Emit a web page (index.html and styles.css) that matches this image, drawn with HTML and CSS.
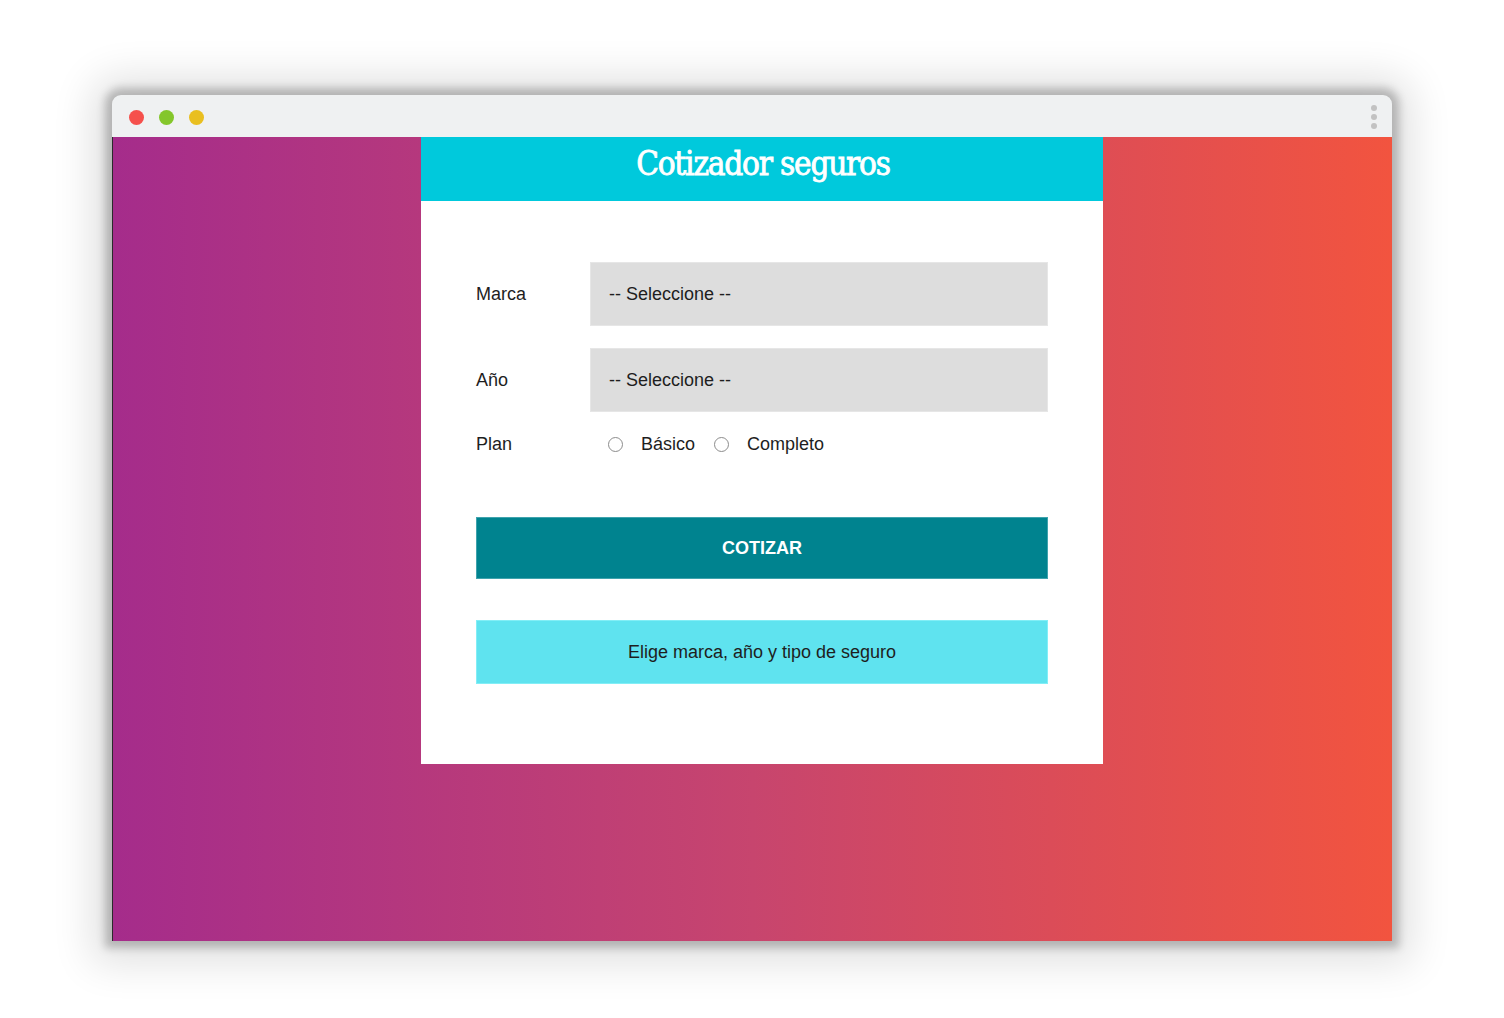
FILE: index.html
```html
<!DOCTYPE html>
<html lang="es">
<head>
<meta charset="utf-8">
<title>Cotizador seguros</title>
<link rel="stylesheet" href="styles.css">
</head>
<body>
<div class="window">
  <div class="titlebar">
    <div class="lights">
      <span class="light red"></span>
      <span class="light green"></span>
      <span class="light yellow"></span>
    </div>
    <div class="kebab"><span></span><span></span><span></span></div>
  </div>
  <div class="content">
    <div class="card">
      <header class="card-header"><h1>Cotizador seguros</h1></header>
      <form class="form">
        <div class="row">
          <label class="label" for="marca">Marca</label>
          <select id="marca" class="field"><option>-- Seleccione --</option></select>
        </div>
        <div class="row">
          <label class="label" for="anio">Año</label>
          <select id="anio" class="field"><option>-- Seleccione --</option></select>
        </div>
        <div class="row plan">
          <span class="label">Plan</span>
          <label class="option"><input type="radio" name="plan" class="radio"><span>Básico</span></label>
          <label class="option"><input type="radio" name="plan" class="radio"><span>Completo</span></label>
        </div>
        <button type="button" class="btn">COTIZAR</button>
        <div class="result">Elige marca, año y tipo de seguro</div>
      </form>
    </div>
  </div>
</div>
</body>
</html>
```
FILE: styles.css
```css
html, body {
  margin: 0;
  padding: 0;
  background: #ffffff;
}
body {
  font-family: "Liberation Sans", Arial, sans-serif;
  padding-top: 95px;
  height: 1018px;
  box-sizing: border-box;
  overflow: hidden;
}
.window {
  margin-left: 112px;
  width: 1280px;
  border-radius: 9px 9px 0 0;
  box-shadow: 0 0 8px 7px rgba(0,0,0,0.22), 0 2px 40px 20px rgba(0,0,0,0.12);
  background: #eff1f2;
}
.titlebar {
  height: 42px;
  display: flex;
  align-items: center;
  justify-content: space-between;
  padding: 0 15px 0 17px;
  border-radius: 9px 9px 0 0;
}
.lights {
  display: flex;
  gap: 15px;
  margin-top: 2px;
}
.light {
  width: 15px;
  height: 15px;
  border-radius: 50%;
  display: block;
}
.red { background: #f5504c; }
.green { background: #84c62b; }
.yellow { background: #e9bf20; }
.kebab {
  display: flex;
  flex-direction: column;
  gap: 3px;
  margin-top: 1px;
}
.kebab span {
  width: 6px;
  height: 6px;
  border-radius: 50%;
  background: #c2c2c2;
  display: block;
}
.content {
  height: 804px;
  background: linear-gradient(90deg, #a52c8b 0%, #c7456e 50%, #f2543f 100%);
  border-left: 1px solid #2a2a2a;
  box-sizing: border-box;
  padding-left: 308px;
}
.card {
  width: 682px;
  background: #ffffff;
}
.card-header {
  height: 64px;
  background: #00c9dc;
  display: flex;
  align-items: center;
  justify-content: center;
}
.card-header h1 {
  margin: 0;
  color: #ffffff;
  font-family: "DejaVu Serif Condensed", "DejaVu Serif", serif;
  font-weight: normal;
  font-size: 33px;
  letter-spacing: -1.2px;
  line-height: 1;
  margin-top: -11px;
  margin-left: 2px;
  -webkit-text-stroke: 0.8px #ffffff;
}
.form {
  padding: 61px 55px 80px;
  display: flex;
  flex-direction: column;
}
.row {
  display: flex;
  align-items: center;
  margin-bottom: 22px;
}
.label {
  width: 114px;
  flex: none;
  font-size: 18px;
  color: #1e1e1e;
}
.field {
  -webkit-appearance: none;
  appearance: none;
  flex: 1;
  height: 64px;
  background: #dddddd;
  border: 1px solid #e6e6e6;
  border-radius: 0;
  padding: 0 18px;
  font-family: "Liberation Sans", Arial, sans-serif;
  font-size: 18px;
  color: #1e1e1e;
  outline: none;
}
.plan {
  height: 20px;
  margin-bottom: 0;
}
.option {
  display: flex;
  align-items: center;
  font-size: 18px;
  color: #1e1e1e;
  margin-right: 19px;
}
.radio {
  -webkit-appearance: none;
  appearance: none;
  width: 15px;
  height: 15px;
  margin: 0 18px 0 18px;
  border: 1px solid #8c8c8c;
  border-radius: 50%;
  background: #ffffff;
  box-sizing: border-box;
}
.option + .option .radio {
  margin-left: 0;
}
.btn {
  margin-top: 63px;
  height: 62px;
  background: #00838f;
  border: 1px solid #3fa3ad;
  color: #ffffff;
  font-family: "Liberation Sans", Arial, sans-serif;
  font-weight: bold;
  font-size: 18px;
  cursor: pointer;
  padding: 0;
}
.result {
  margin-top: 41px;
  height: 64px;
  background: #5fe3ef;
  border: 1px solid #82eef6;
  box-sizing: border-box;
  display: flex;
  align-items: center;
  justify-content: center;
  font-size: 18px;
  color: #1e1e1e;
}
```
